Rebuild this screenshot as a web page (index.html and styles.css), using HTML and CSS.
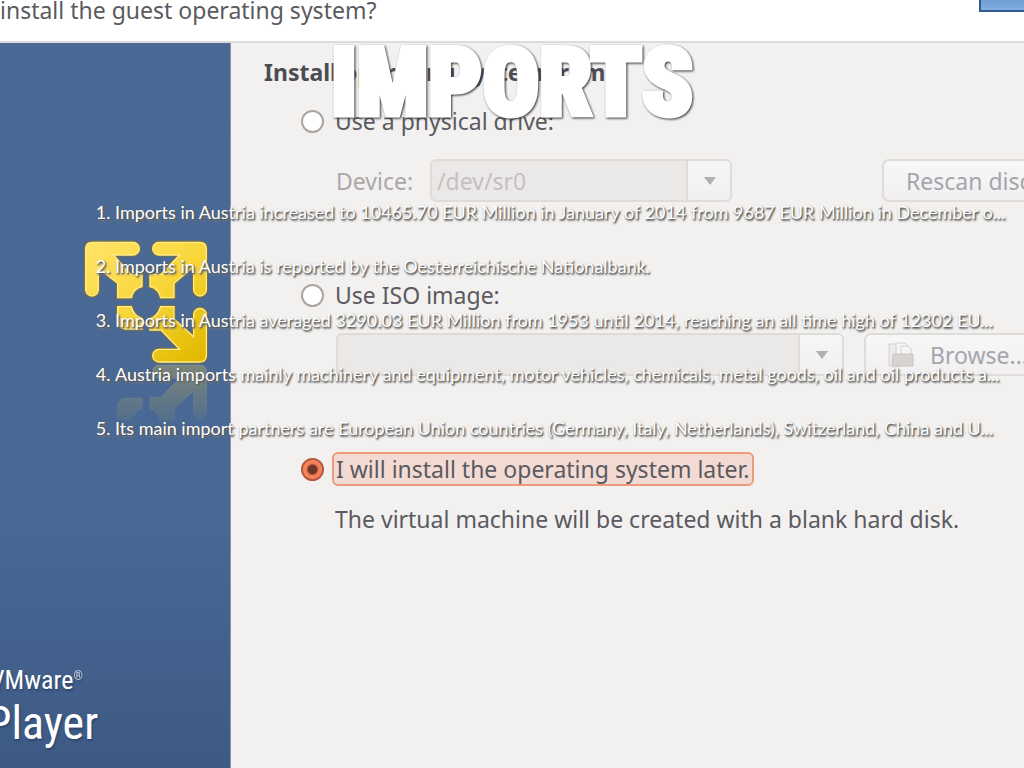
FILE: index.html
```html
<!DOCTYPE html>
<html lang="en">
<head>
<meta charset="utf-8">
<title>Imports</title>
<link rel="stylesheet" href="styles.css">
</head>
<body>
<div class="stage">
  <div class="wizard">
    <header class="wizard-header">
      <p class="question">install the guest operating system?</p>
      <span class="badge"></span>
    </header>
    <div class="wizard-body">
      <aside class="sidebar">
        <svg class="logo" viewBox="72 150 372 540" aria-hidden="true">
          <defs>
            <linearGradient id="gold" gradientUnits="userSpaceOnUse" x1="100" y1="157" x2="400" y2="516">
              <stop offset="0" stop-color="#ffe366"/><stop offset="0.5" stop-color="#f8d63a"/><stop offset="1" stop-color="#e2b900"/>
            </linearGradient>
            <linearGradient id="fade" gradientUnits="userSpaceOnUse" x1="0" y1="522" x2="0" y2="690">
              <stop offset="0" stop-color="#fff" stop-opacity="0.36"/><stop offset="1" stop-color="#fff" stop-opacity="0.08"/>
            </linearGradient>
            <mask id="fade-mask" maskUnits="userSpaceOnUse" x="72" y="518" width="372" height="172"><rect x="72" y="518" width="372" height="172" fill="url(#fade)"/></mask>
            <g id="lower">
              <path d="M419 516H297a19 19 0 0 1 0-38H359L303 420H270V386Q292 380 302 350H342V387L401 440V374a19 19 0 0 1 38 0V496Q439 516 419 516Z"/>
              <path d="M173 350H214Q220 377 246 386V417H197Q173 414 173 388Z"/>
            </g>
          </defs>
          <g fill="none" stroke="#8a7424" stroke-width="9">
            <path d="M97 157H219a19 19 0 0 1 0 38H160L213 253H246V290Q220 296 214 323H173V280L115 234V299a19 19 0 0 1-38 0V177Q77 157 97 157Z"/>
            <path d="M419 157H297a19 19 0 0 0 0 38H359L303 253H270V290Q296 296 302 323H342V280L401 230V299a19 19 0 0 0 38 0V177Q439 157 419 157Z"/>
            <use href="#lower"/>
          </g>
          <g fill="url(#gold)" stroke="#ffec90" stroke-width="4">
            <path d="M97 157H219a19 19 0 0 1 0 38H160L213 253H246V290Q220 296 214 323H173V280L115 234V299a19 19 0 0 1-38 0V177Q77 157 97 157Z"/>
            <path d="M419 157H297a19 19 0 0 0 0 38H359L303 253H270V290Q296 296 302 323H342V280L401 230V299a19 19 0 0 0 38 0V177Q439 157 419 157Z"/>
            <use href="#lower"/>
          </g>
          <g mask="url(#fade-mask)"><use href="#lower" transform="translate(0 1042) scale(1 -1)" fill="#d6be48" stroke="#e8dc8c" stroke-width="3"/></g>
        </svg>
        <p class="brand"><span class="brand-maker">VMware<sup>®</sup></span><span class="brand-name">Player</span></p>
      </aside>
      <main class="options">
        <h2 class="heading">Install operating system from:</h2>
        <label class="choice"><input class="radio" type="radio" name="source"><span class="choice-text">Use a physical drive:</span></label>
        <div class="row row-device">
          <label class="device-label" for="device">Device:</label>
          <div class="combo combo-device">
            <select id="device" class="combo-field" disabled><option>/dev/sr0</option></select>
            <svg class="arrow" viewBox="0 0 14 10" aria-hidden="true"><path d="M1 1H13L7 9Z"/></svg>
          </div>
          <button class="button button-rescan" type="button" disabled>Rescan discs</button>
        </div>
        <label class="choice choice-iso"><input class="radio" type="radio" name="source"><span class="choice-text">Use ISO image:</span></label>
        <div class="row row-iso">
          <div class="combo combo-iso">
            <select class="combo-field" aria-label="ISO image" disabled><option></option></select>
            <svg class="arrow" viewBox="0 0 14 10" aria-hidden="true"><path d="M1 1H13L7 9Z"/></svg>
          </div>
          <button class="button button-browse" type="button" disabled>
            <svg class="folder" viewBox="0 0 26 26" aria-hidden="true">
              <path d="M1 2H9L12 5V24H1Z" fill="#eceaea" stroke="#d3cfce"/>
              <path d="M8 1H17L21 5V14H8Z" fill="#f7f5f5" stroke="#d3cfce"/>
              <path d="M13 4H20L23 7V14H13Z" fill="#f7f5f5" stroke="#d3cfce"/>
              <path d="M5 12H25V24H4Z" fill="#d8d2d1" stroke="#c9c4c3"/>
            </svg>
            Browse...
          </button>
        </div>
        <label class="choice choice-later"><input class="radio" type="radio" name="source" checked><span class="choice-text focused">I will install the operating system later.</span></label>
        <p class="note">The virtual machine will be created with a blank hard disk.</p>
      </main>
    </div>
  </div>
  <section class="slide">
    <h1 class="title">IMPORTS</h1>
    <ol class="facts">
      <li>Imports in Austria increased to 10465.70 EUR Million in January of 2014 from 9687 EUR Million in December o...</li>
      <li>Imports in Austria is reported by the Oesterreichische Nationalbank.</li>
      <li>Imports in Austria averaged 3290.03 EUR Million from 1953 until 2014, reaching an all time high of 12302 EU...</li>
      <li>Austria imports mainly machinery and equipment, motor vehicles, chemicals, metal goods, oil and oil products a...</li>
      <li>Its main import partners are European Union countries (Germany, Italy, Netherlands), Switzerland, China and U...</li>
    </ol>
  </section>
</div>
</body>
</html>
```
FILE: styles.css
```css
* { box-sizing: border-box; }
body, h1, h2, p, ol { margin: 0; padding: 0; }
body { background: #f2f1f0; font: 23px/32px "Noto Sans", sans-serif; color: #5a5a60; }
.stage { position: relative; min-height: 100vh; overflow: hidden; }
.wizard { display: flex; flex-direction: column; min-height: 100vh; }
.wizard-header { display: flex; justify-content: space-between; height: 43px; background: #fff; border-bottom: 2px solid #dddcdb; white-space: nowrap; }
.question { margin-top: -6px; }
.badge { width: 45px; height: 12px; background: linear-gradient(#6f9fd2, #82ade0); border: 2px solid #35588f; border-width: 0 0 2px 2px; }
.wizard-body { display: flex; flex: 1; }
.sidebar { flex: none; width: 231px; padding: 197px 0 18px; display: flex; flex-direction: column; justify-content: space-between; background: linear-gradient(#4a6994 0%, #496894 65%, #3d5a84 100%); border-right: 1px solid #8d95a8; overflow: hidden; }
.logo { width: 124px; height: 180px; margin-left: 84px; }
.brand { display: flex; flex-direction: column; color: #fff; font-family: "Roboto Condensed", "Open Sans Condensed", Roboto, sans-serif; text-shadow: 1px 2px 2px #2d466c; white-space: nowrap; }
.brand-maker { margin-left: -10px; font-size: 26px; line-height: 32px; }
.brand-maker sup { font-size: 12px; line-height: 12px; vertical-align: 9px; opacity: .7; }
.brand-name { margin-left: -14px; font-size: 46px; line-height: 54px; }

.options { flex: 1; min-width: 0; padding: 13px 0 24px 33px; white-space: nowrap; }
.heading { font-size: 23px; line-height: 32px; margin-bottom: 17px; color: #4c4c52; }
.choice { display: flex; align-items: center; margin-left: 37px; }
.choice-text { padding: 0 3px; margin-left: 8px; }
.radio { appearance: none; flex: none; width: 23px; height: 23px; margin: 0; border: 2px solid #a9a5a2; border-radius: 50%; background: #fff; }
.radio:checked { border-color: #b5583b; background: radial-gradient(circle, #6e3527 0 4px, #f0784e 6px, #f58c63 9px); }
.focused { border: 2px solid #ee9a7c; border-radius: 6px; background: #f3dbd3; line-height: 30px; padding: 0 2px; }
.row { display: flex; align-items: center; height: 43px; margin-left: 72px; color: #aaa7a8; }
.row-device { margin-top: 22px; }
.device-label { flex: none; width: 94px; }
.choice-iso { margin-top: 77px; }
.row-iso { margin-top: 22px; }
.choice-later { margin-top: 76px; }
.note { margin: 17px 0 0 71px; }
.combo { position: relative; flex: none; height: 43px; }
.combo-device { width: 302px; }
.combo-iso { width: 508px; }
.combo-field { appearance: none; width: 100%; height: 100%; padding: 0 48px 0 5px; font: inherit; color: #c5bfc0; opacity: 1; border: 2px solid #dedbd9; border-radius: 6px; background: linear-gradient(#f7f6f6, #f1efef) right / 42px 100% no-repeat, linear-gradient(#dedbd9, #dedbd9) right 42px top / 2px 100% no-repeat, #eae9e8; }
.arrow { position: absolute; right: 15px; top: 17px; width: 14px; height: 10px; fill: #b2afaf; }
.button { display: flex; align-items: center; flex: none; height: 43px; padding: 0 22px; font: inherit; color: #a5a5ad; border: 2px solid #dedbd9; border-radius: 7px; background: linear-gradient(#f8f7f7, #f1efef); }
.button-rescan { margin-left: 150px; }
.button-browse { margin-left: 20px; gap: 16px; }
.folder { width: 26px; height: 26px; }

.slide { position: absolute; inset: 0; padding: 33px 24px 0 96px; color: #fff; }
.title { margin-right: 72px; text-align: center; font: 900 94px/100px "Roboto Condensed", "Open Sans Condensed", Roboto, sans-serif; -webkit-text-stroke: 5px #fff; filter: drop-shadow(1px 1px 1px #333); }
.facts { margin-top: 64px; padding-left: 19px; font: 18px/30px Lato, sans-serif; text-shadow: 1px 1px 2px #444, 1px 2px 2px #888; white-space: nowrap; }
.facts li { margin-bottom: 24px; }
```
